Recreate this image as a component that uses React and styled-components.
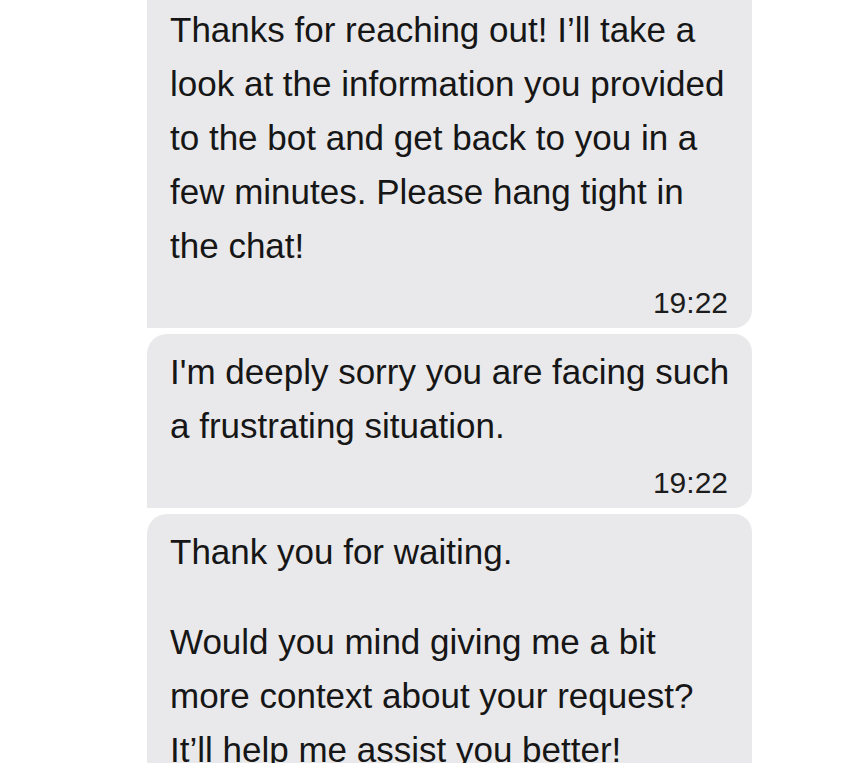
import React from "react";
import styled, { createGlobalStyle } from "styled-components";

const GlobalStyle = createGlobalStyle`
  html, body {
    margin: 0;
    padding: 0;
    background: #ffffff;
  }
  body {
    font-family: "Liberation Sans", Arial, sans-serif;
    -webkit-font-smoothing: antialiased;
  }
`;

const Page = styled.div`
  width: 845px;
  height: 763px;
  overflow: hidden;
  background: #ffffff;
`;

const Thread = styled.div`
  display: flex;
  flex-direction: column;
  gap: 6px;
  width: 605px;
  margin-left: 147px;
`;

const Bubble = styled.div`
  display: flex;
  flex-direction: column;
  background: #e9e9eb;
  color: #161616;
  padding: ${(p) => (p.$cut ? "3px" : "11px")} 24px 5px 23px;
  border-radius: ${(p) => (p.$cut ? "0 0 18px 0" : "20px 18px 18px 0")};
`;

const Paragraph = styled.p`
  margin: 0;
  font-size: 35px;
  line-height: 54px;
  white-space: nowrap;

  & + & {
    margin-top: 36px;
  }
`;

const Time = styled.span`
  align-self: flex-end;
  margin-top: 10px;
  font-size: 30px;
  line-height: 40px;
  color: #1c1c1c;
`;

const messages = [
  {
    cut: true,
    paragraphs: [
      [
        "Thanks for reaching out! I\u2019ll take a",
        "look at the information you provided",
        "to the bot and get back to you in a",
        "few minutes. Please hang tight in",
        "the chat!",
      ],
    ],
    time: "19:22",
  },
  {
    paragraphs: [
      ["I'm deeply sorry you are facing such", "a frustrating situation."],
    ],
    time: "19:22",
  },
  {
    paragraphs: [
      ["Thank you for waiting."],
      [
        "Would you mind giving me a bit",
        "more context about your request?",
        "It\u2019ll help me assist you better!",
      ],
    ],
  },
];

function App() {
  return (
    <Page>
      <GlobalStyle />
      <Thread>
        {messages.map((m, i) => (
          <Bubble key={i} $cut={m.cut}>
            {m.paragraphs.map((lines, j) => (
              <Paragraph key={j}>
                {lines.map((line, k) => (
                  <React.Fragment key={k}>
                    {line}
                    {k < lines.length - 1 && <br />}
                  </React.Fragment>
                ))}
              </Paragraph>
            ))}
            {m.time && <Time>{m.time}</Time>}
          </Bubble>
        ))}
      </Thread>
    </Page>
  );
}

export default App;
